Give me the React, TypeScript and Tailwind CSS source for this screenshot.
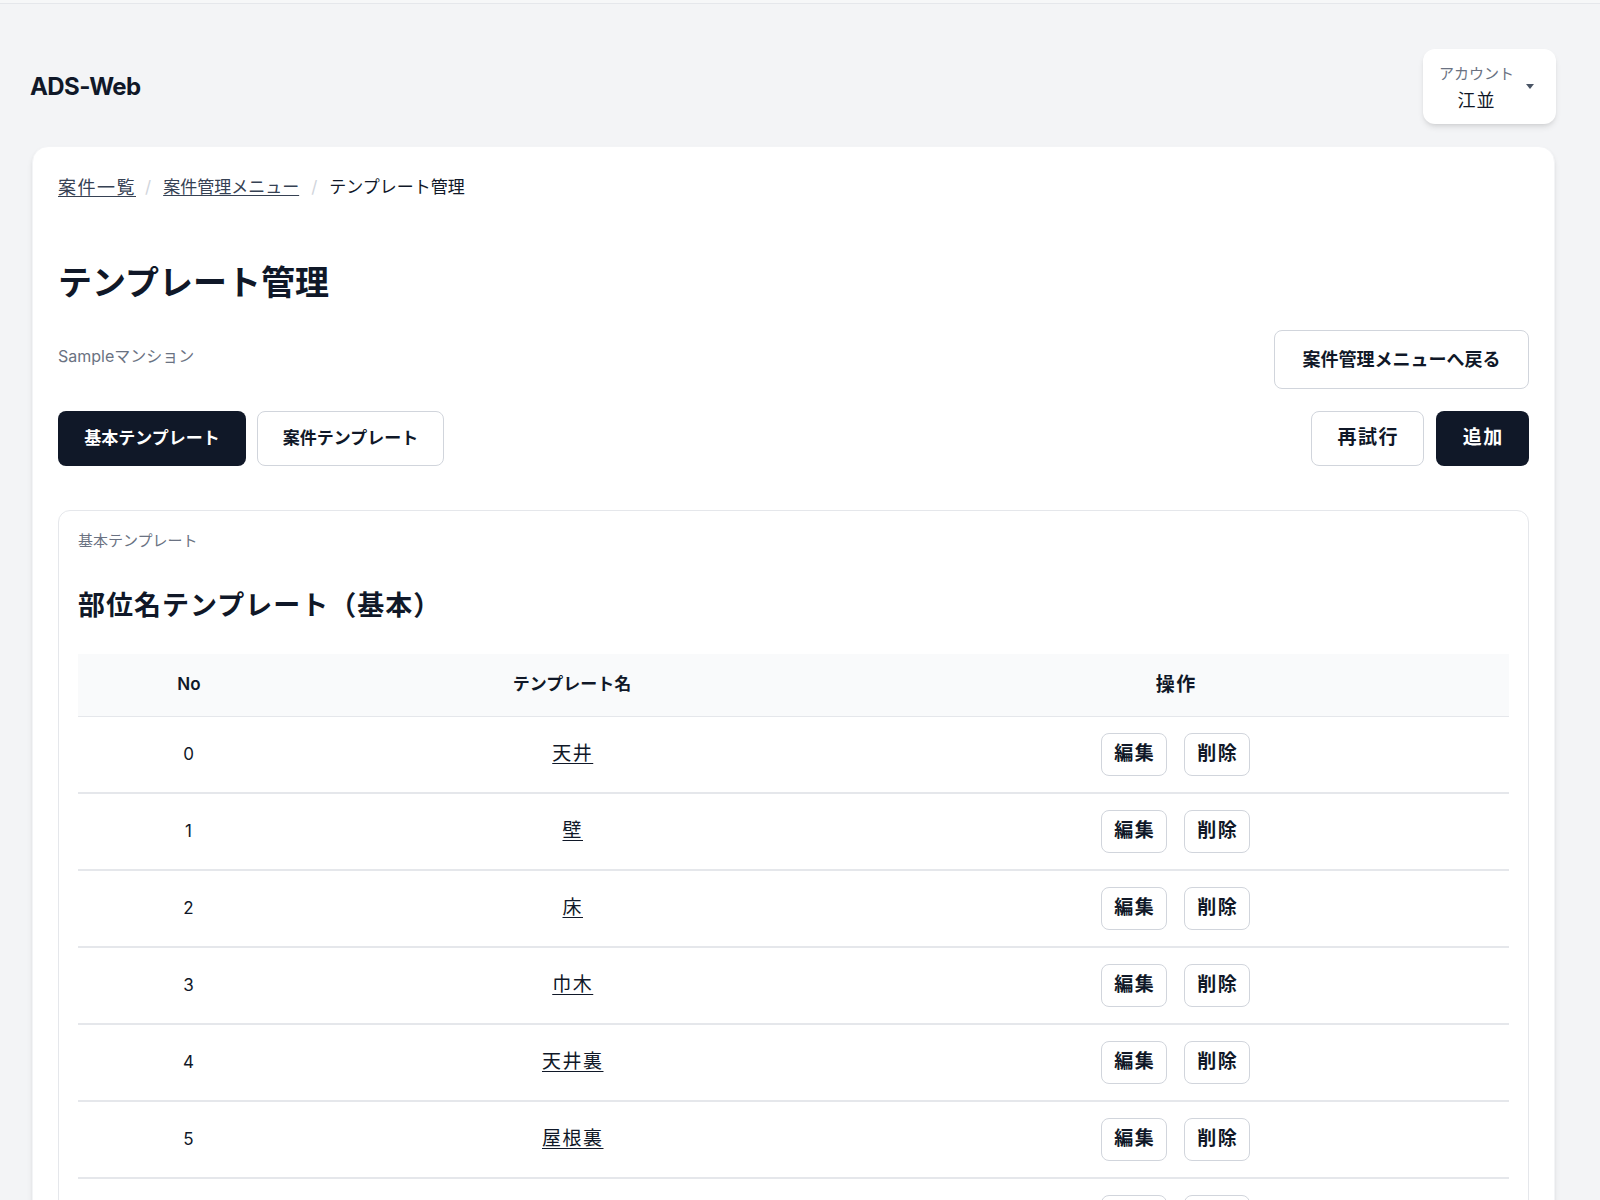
import React from 'react';

const rows = [
  { no: 0, name: '天井' },
  { no: 1, name: '壁' },
  { no: 2, name: '床' },
  { no: 3, name: '巾木' },
  { no: 4, name: '天井裏' },
  { no: 5, name: '屋根裏' },
  { no: 6, name: '外壁' },
  { no: 7, name: '階段' },
];

const font = { fontFamily: 'Inter, "Noto Sans CJK JP", sans-serif' };

function Caret() {
  return (
    <svg width="8" height="5" viewBox="0 0 8 5" className="text-gray-600">
      <path d="M0 0 L8 0 L4 5 Z" fill="currentColor" />
    </svg>
  );
}

export default function App() {
  return (
    <div className="min-h-screen bg-[#f3f4f6] text-gray-900" style={font}>
      <div className="h-[4px] bg-[#f6f7f8] border-b border-gray-200" />

      <div className="pl-[30px] pr-[44px] pt-[45px] pb-[22px] flex items-center justify-between">
        <div className="text-[24px] font-bold tracking-tight">ADS-Web</div>
        <button className="h-[75px] w-[133px] rounded-xl bg-white shadow-md flex items-center justify-between pl-[16px] pr-[22px]">
          <div className="flex flex-col items-center leading-[27px]">
            <span className="text-[15px] text-gray-500">アカウント</span>
            <span className="text-[18px] text-gray-900 tracking-[1px]">江並</span>
          </div>
          <Caret />
        </button>
      </div>

      <div className="ml-[32px] mr-[45px] rounded-2xl bg-white border border-gray-100 shadow-md px-[25px] pt-[28px] pb-[40px]">
        <nav className="flex items-center text-[17px] leading-[25px]">
          <a className="underline text-gray-700 underline-offset-2 text-[18px] tracking-[1.5px]">案件一覧</a>
          <span className="ml-[9px] mr-[12px] text-gray-300">/</span>
          <a className="underline text-gray-700 underline-offset-2">案件管理メニュー</a>
          <span className="mx-[12px] text-gray-300">/</span>
          <span className="text-gray-900">テンプレート管理</span>
        </nav>

        <h1 className="mt-[62px] text-[34px] leading-[42px] font-bold">テンプレート管理</h1>

        <div className="mt-[26px] flex items-start justify-between">
          <p className="pt-[15px] text-[16px] leading-[22px] text-gray-500">Sampleマンション</p>
          <button className="w-[255px] h-[59px] rounded-lg border border-gray-300 bg-white text-[18px] font-semibold">
            案件管理メニューへ戻る
          </button>
        </div>

        <div className="mt-[22px] flex items-center justify-between">
          <div className="flex gap-[11px]">
            <button className="w-[188px] h-[55px] rounded-lg bg-gray-900 text-white text-[17px] font-semibold">
              基本テンプレート
            </button>
            <button className="w-[187px] h-[55px] rounded-lg border border-gray-300 bg-white text-[17px] font-semibold">
              案件テンプレート
            </button>
          </div>
          <div className="flex gap-[12px]">
            <button className="w-[113px] h-[55px] rounded-lg border border-gray-300 bg-white text-[19px] font-semibold tracking-[1.5px] pl-[1.5px]">
              再試行
            </button>
            <button className="w-[93px] h-[55px] rounded-lg bg-gray-900 text-white text-[19px] font-semibold tracking-[1.5px] pl-[1.5px]">
              追加
            </button>
          </div>
        </div>

        <section className="mt-[44px] rounded-xl border border-gray-200 px-[19px] pt-[19px] pb-[20px]">
          <div className="text-[15px] leading-[22px] text-gray-500">基本テンプレート</div>
          <h2 className="mt-[36px] text-[27px] leading-[36px] font-semibold tracking-[1px]">部位名テンプレート（基本）</h2>

          <table className="mt-[30px] w-full table-fixed border-collapse text-[17px]">
            <colgroup>
              <col className="w-[224px]" />
              <col className="w-[540px]" />
              <col />
            </colgroup>
            <thead>
              <tr className="bg-gray-50 border-b border-gray-200 h-[62px]">
                <th className="font-semibold pr-[2px]">No</th>
                <th className="font-semibold">テンプレート名</th>
                <th className="font-semibold text-[19px] tracking-[1.5px] pl-[1.5px]">操作</th>
              </tr>
            </thead>
            <tbody>
              {rows.map((r) => (
                <tr key={r.no} className="border-b-2 border-gray-200 h-[77px]">
                  <td className="text-center pr-[3px]">{r.no}</td>
                  <td className="text-center">
                    <a className="underline underline-offset-[3px] text-[19px] tracking-[1.5px] pl-[1.5px]">{r.name}</a>
                  </td>
                  <td>
                    <div className="flex justify-center gap-[17px]">
                      <button className="w-[66px] h-[43px] rounded-lg border border-gray-300 bg-white text-[19px] font-semibold tracking-[1.5px] pl-[1.5px]">
                        編集
                      </button>
                      <button className="w-[66px] h-[43px] rounded-lg border border-gray-300 bg-white text-[19px] font-semibold tracking-[1.5px] pl-[1.5px]">
                        削除
                      </button>
                    </div>
                  </td>
                </tr>
              ))}
            </tbody>
          </table>
        </section>
      </div>
    </div>
  );
}
